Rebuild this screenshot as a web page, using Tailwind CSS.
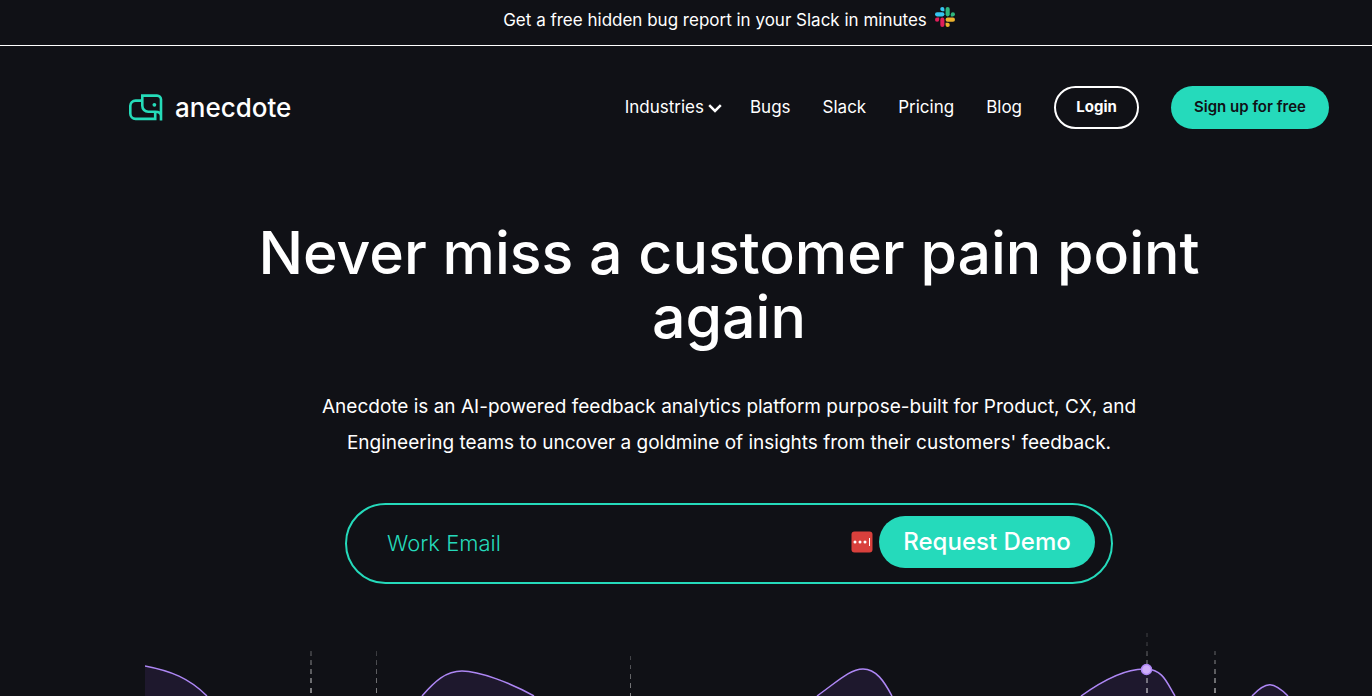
<!DOCTYPE html>
<html lang="en">
  <head>
    <meta charset="utf-8" />
    <meta name="viewport" content="width=device-width, initial-scale=1" />
    <title>anecdote</title>
    <script src="https://cdn.jsdelivr.net/npm/@tailwindcss/browser@4"></script>
  </head>

  <body class="bg-[#101116] font-[Inter,'Liberation_Sans',sans-serif] text-white overflow-x-hidden">
    <a href="#" class="flex items-center justify-center gap-2 h-[46px] pl-[86px] pb-1 border-b border-white text-[17px]">
      Get a free hidden bug report in your Slack in minutes
      <svg class="w-5 h-5 mb-2" viewBox="0 0 20 20">
        <g fill="#36c5f0">
          <path d="M7.3 0a2.1 2.1 0 1 0 0 4.2h2.1V2.1A2.1 2.1 0 0 0 7.3 0z" />
          <rect x="0" y="5.3" width="9.4" height="4.1" rx="2.05" />
        </g>
        <g fill="#2eb67d">
          <path d="M20 7.3a2.1 2.1 0 1 0-4.2 0v2.1h2.1A2.1 2.1 0 0 0 20 7.3z" />
          <rect x="10.6" y="0" width="4.1" height="9.4" rx="2.05" />
        </g>
        <g fill="#ecb22e">
          <path d="M12.7 20a2.1 2.1 0 1 0 0-4.2h-2.1v2.1a2.1 2.1 0 0 0 2.1 2.1z" />
          <rect x="10.6" y="10.6" width="9.4" height="4.1" rx="2.05" />
        </g>
        <g fill="#e01e5a">
          <path d="M0 12.7a2.1 2.1 0 1 0 4.2 0v-2.1H2.1A2.1 2.1 0 0 0 0 12.7z" />
          <rect x="5.3" y="10.6" width="4.1" height="9.4" rx="2.05" />
        </g>
      </svg>
    </a>

    <div class="pl-[86px]">
      <header class="flex items-center justify-between max-w-[1200px] mx-auto pt-10">
        <a href="#" class="flex items-center gap-3 text-[26px] font-medium">
          <svg class="w-[34px] h-[27px]" viewBox="0 0 34 27" fill="none" stroke="#25dcb9" stroke-width="2.6">
            <path d="M12.5 6.6H6.6A5.3 5.3 0 0 0 1.3 12v7.6a5.3 5.3 0 0 0 5.3 5.3h19.6v-7.2" />
            <path d="M32 26.5V5.6a4 4 0 0 0-4-4H13.300v10.200a5.900 5.900 0 0 0 5.900 5.900h7c3 0 5.800 1 5.800 4.300" />
            <circle cx="25.400" cy="10.800" r="1.900" fill="#25dcb9" stroke="none" />
          </svg>
          anecdote
        </a>
        <nav class="flex items-center gap-8 text-[17px]">
          <a href="#" class="flex items-center gap-1 -mr-1">
            Industries
            <svg class="w-3.5 h-3.5" viewBox="0 0 14 14" fill="none" stroke="currentColor" stroke-width="2.5"><path d="M1.200 4.200 7 10l5.800-5.800" /></svg>
          </a>
          <a href="#">Bugs</a>
          <a href="#">Slack</a>
          <a href="#">Pricing</a>
          <a href="#">Blog</a>
          <button class="w-[85px] h-[43px] rounded-full border-2 border-white text-[15px] font-bold">Login</button>
          <button class="w-[158px] h-[43px] rounded-full bg-[#25dabb] text-[#101116] text-[15px] font-semibold">Sign up for free</button>
        </nav>
      </header>

      <main class="max-w-[1200px] mx-auto px-4 pt-[92px] text-center">
        <h1 class="max-w-[1000px] mx-auto text-[59px] leading-16 font-medium">Never miss a customer pain point again</h1>
        <p class="max-w-[840px] mx-auto mt-10 text-[19px] leading-9">
          Anecdote is an AI-powered feedback analytics platform purpose-built for Product, CX, and Engineering teams to uncover a goldmine of insights from their customers' feedback.
        </p>
        <form class="flex items-center max-w-[768px] h-[81px] mx-auto mt-[42px] pl-10 pr-4 pb-1 border-2 border-[#25dabb] rounded-full">
          <input type="email" aria-label="Work Email" placeholder="Work Email" class="flex-1 min-w-0 pt-1 text-[22px] font-light placeholder:text-[#25dabb] outline-none" />
          <svg class="w-[22px] h-[22px] mr-1.5" viewBox="0 0 22 22">
            <rect x="0.5" y="0.5" width="21" height="21" rx="3" fill="#d9403c" />
            <g fill="#fff">
              <circle cx="4" cy="11" r="1.5" />
              <circle cx="9" cy="11" r="1.5" />
              <circle cx="14" cy="11" r="1.5" />
              <rect x="18" y="7" width="1" height="8" />
            </g>
          </svg>
          <button class="w-[216px] h-[52px] rounded-full bg-[#25dabb] text-2xl font-medium">Request Demo</button>
        </form>

        <svg class="w-full h-[66px] mt-[46px]" viewBox="0 0 1168 66" fill="none">
          <defs>
            <linearGradient id="fade" x1="0" y1="0" x2="0" y2="66" gradientUnits="userSpaceOnUse">
              <stop offset="0.2" stop-color="#fff" stop-opacity="0.1" />
              <stop offset="1" stop-color="#fff" stop-opacity="0.5" />
            </linearGradient>
          </defs>
          <g fill="#1e182d">
            <path d="M0 36C26 41 44 48 62 66H0z" />
            <path d="M277 66C290 51 301 41 317 41C334 41 366 53 389 66z" />
            <path d="M672 66C693 51 705 39 718 39C731 39 739 51 747 66z" />
            <path d="M936 66C957 51 980 38 1001 39C1018 40 1021 51 1030 66z" />
            <path d="M1107 66C1121 51 1128 51 1143 66z" />
          </g>
          <g stroke="#ae87f5" stroke-width="1.5">
            <path d="M0 36C26 41 44 48 62 66" />
            <path d="M277 66C290 51 301 41 317 41C334 41 366 53 389 66" />
            <path d="M672 66C693 51 705 39 718 39C731 39 739 51 747 66" />
            <path d="M936 66C957 51 980 38 1001 39C1018 40 1021 51 1030 66" />
            <path d="M1107 66C1121 51 1128 51 1143 66" />
          </g>
          <g fill="url(#fade)">
            <path d="M165 21h2v5h-2zm0 9h2v5h-2zm0 9h2v5h-2zm0 9h2v5h-2zm0 10h2v5h-2z" />
            <path d="M231 21h1v5h-1zm0 9h1v5h-1zm0 9h1v5h-1zm0 9h1v5h-1zm0 10h1v5h-1z" />
            <path d="M485 26h1v4h-1zm0 9h1v4h-1zm0 9h1v5h-1zm0 9h1v5h-1zm0 10h1v3h-1z" />
            <path d="M1001 3h2v4h-2zm0 9h2v4h-2zm0 9h2v5h-2zm0 9h2v4h-2zm0 18h2v5h-2zm0 10h2v5h-2z" />
            <path d="M1069 21h2v4h-2zm0 9h2v4h-2zm0 9h2v5h-2zm0 9h2v5h-2zm0 10h2v5h-2z" />
          </g>
          <circle cx="1001.5" cy="39.5" r="5" fill="#cfaefa" stroke="#ae87f5" stroke-width="1.5" />
        </svg>
      </main>
    </div>
  </body>
</html>
